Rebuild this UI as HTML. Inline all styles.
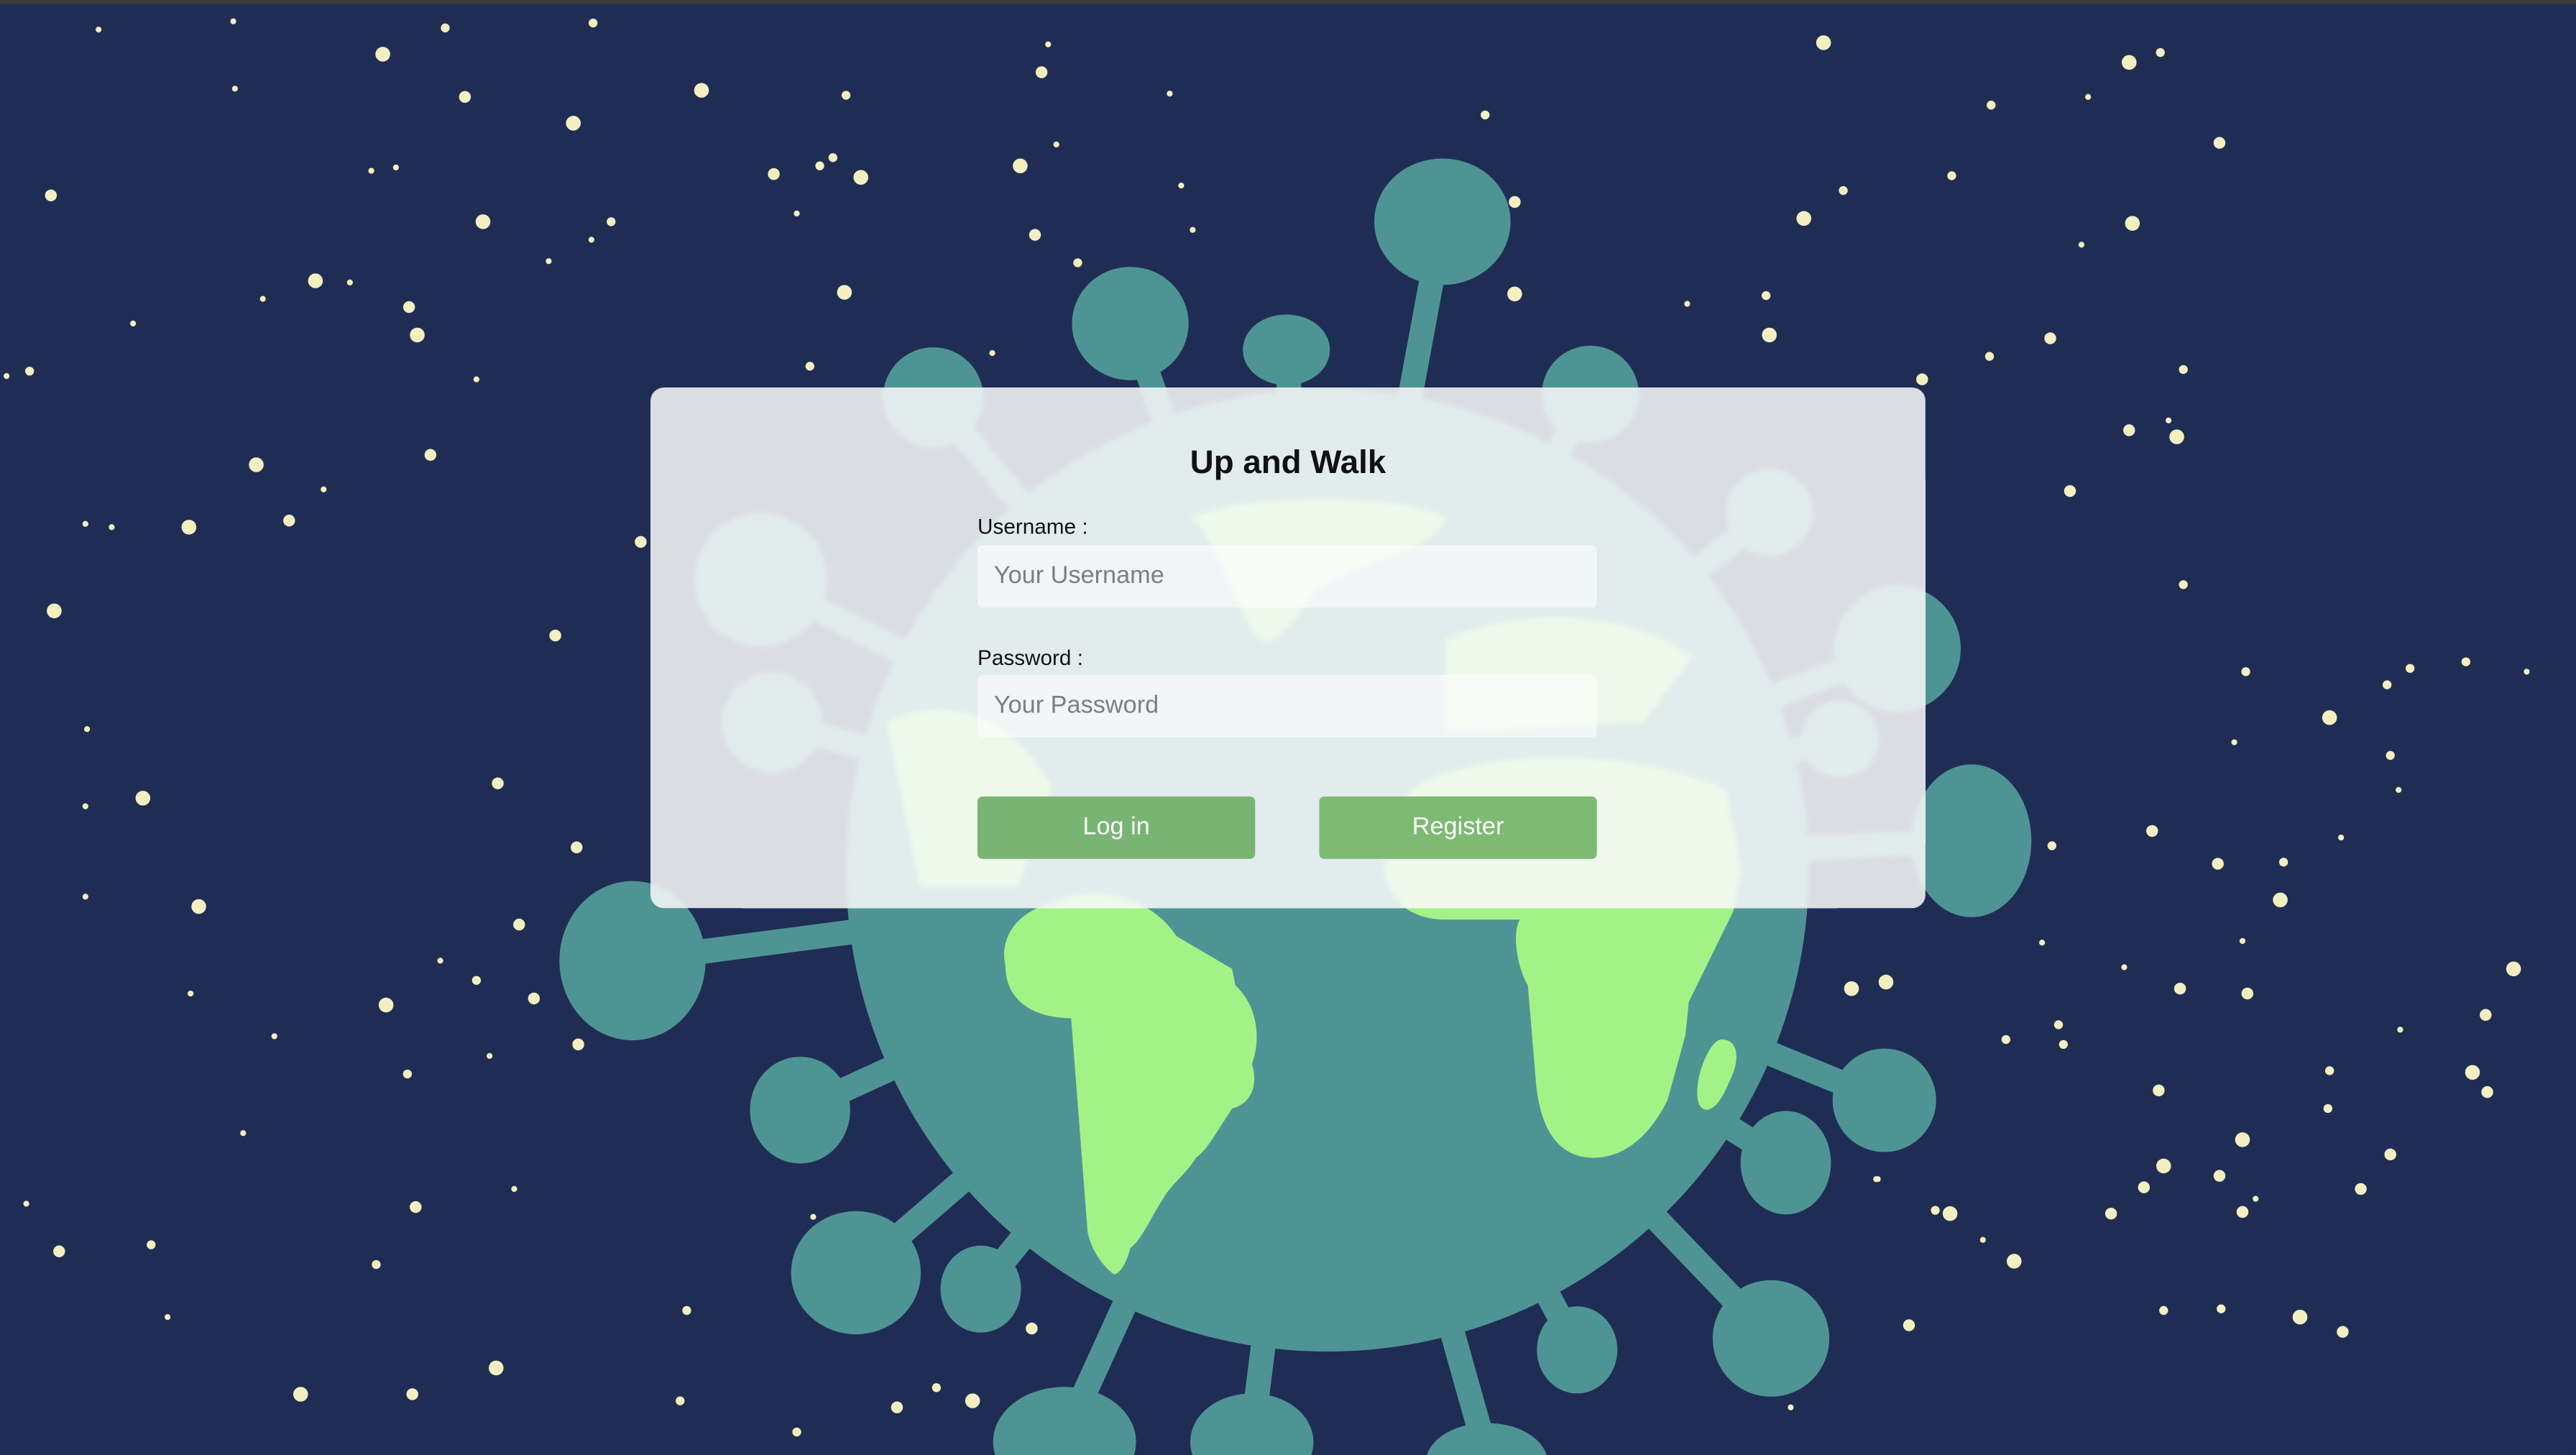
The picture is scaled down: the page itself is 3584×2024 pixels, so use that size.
<!DOCTYPE html>
<html><head><meta charset="utf-8"><style>
html,body{margin:0;padding:0;width:3584px;height:2024px;overflow:hidden;background:#1f2d54}
#w{position:absolute;left:0;top:0;width:1568px;height:886px;transform-origin:0 0;transform:scale(2.28571,2.28442);font-family:"Liberation Sans",sans-serif}
svg{position:absolute;left:0;top:0}
.card{position:absolute;left:396px;top:236px;width:776px;height:317px;border-radius:8px;background:rgba(250,250,252,0.86);backdrop-filter:blur(1.5px)}
h1{position:absolute;left:0;width:776px;top:271px;margin:0;text-align:center;font-size:20px;font-weight:bold;color:#111}
.lbl{position:absolute;left:595px;font-size:13px;color:#111}
.inp{position:absolute;left:595px;width:377px;height:38px;background:rgba(255,255,255,0.55);border-radius:3px;font-size:15px;color:#7a7f80;line-height:38px;text-indent:10px}
.btn{position:absolute;top:485px;width:169px;height:38px;border-radius:3px;color:#fff;font-size:15px;text-align:center;line-height:38px}
</style></head><body><div id="w">
<svg width="1568" height="886" viewBox="0 0 1568 886">
<rect width="1568" height="886" fill="#1f2d54"/>
<rect width="1568" height="2.5" fill="#3c3c3c"/>
<g fill="#f3efc0" id="stars">
</g>
<g stroke="#4f9494" stroke-width="15" fill="#4f9494">
<line x1="805" y1="530" x2="878" y2="135"/><ellipse cx="878" cy="135" rx="34" ry="31"/>
<line x1="805" y1="530" x2="688" y2="197"/><ellipse cx="688" cy="197" rx="28" ry="27"/>
<line x1="805" y1="530" x2="783" y2="213"/><ellipse cx="783" cy="213" rx="19" ry="14"/>
<line x1="805" y1="530" x2="568" y2="242"/><circle cx="568" cy="242" r="23"/>
<line x1="805" y1="530" x2="968" y2="240"/><circle cx="968" cy="240" r="22"/>
<line x1="805" y1="530" x2="463" y2="353"/><circle cx="463" cy="353" r="33"/>
<line x1="805" y1="530" x2="1077" y2="312"/><circle cx="1077" cy="312" r="19"/>
<line x1="805" y1="530" x2="1155" y2="395"/><ellipse cx="1155" cy="395" rx="31" ry="31"/>
<line x1="805" y1="530" x2="470" y2="440"/><circle cx="470" cy="440" r="23"/>
<line x1="805" y1="530" x2="1120" y2="450"/><circle cx="1120" cy="450" r="16"/>
<line x1="805" y1="530" x2="1200" y2="512"/><ellipse cx="1200" cy="512" rx="29" ry="39"/>
<line x1="805" y1="530" x2="385" y2="585"/><ellipse cx="385" cy="585" rx="37" ry="41"/>
<line x1="805" y1="530" x2="1147" y2="670"/><circle cx="1147" cy="670" r="24"/>
<line x1="805" y1="530" x2="487" y2="676"/><ellipse cx="487" cy="676" rx="23" ry="25"/>
<line x1="805" y1="530" x2="1087" y2="708"/><ellipse cx="1087" cy="708" rx="20" ry="24"/>
<line x1="805" y1="530" x2="521" y2="775"/><ellipse cx="521" cy="775" rx="32" ry="30"/>
<line x1="805" y1="530" x2="597" y2="785"/><ellipse cx="597" cy="785" rx="17" ry="19"/>
<line x1="805" y1="530" x2="960" y2="822"/><ellipse cx="960" cy="822" rx="17" ry="19"/>
<line x1="805" y1="530" x2="1078" y2="815"/><ellipse cx="1078" cy="815" rx="28" ry="28"/>
<line x1="805" y1="530" x2="648" y2="875"/><ellipse cx="648" cy="878" rx="36" ry="26"/>
<line x1="805" y1="530" x2="762" y2="875"/><ellipse cx="762" cy="878" rx="30" ry="22"/>
<line x1="805" y1="530" x2="905" y2="886"/><ellipse cx="905" cy="892" rx="30" ry="18"/>
<circle cx="808" cy="530" r="293" stroke="none"/>
</g>
<g fill="#a3f287">
<path d="M640 550 C665 538 700 545 716 570 L750 590 L752 600 C765 612 768 632 762 648 C766 660 762 672 750 675 C740 690 735 700 728 705 C722 715 712 722 708 730 C700 742 695 755 688 760 C686 768 682 776 678 776 C670 770 664 760 662 750 L652 620 C630 620 612 610 612 588 C608 570 620 555 640 550Z"/>
<path d="M860 480 C900 455 990 455 1050 480 L1060 530 L1055 555 L1028 610 L1026 630 L1015 670 C1005 690 990 705 970 705 C950 705 938 690 935 660 L930 600 C924 590 920 570 925 560 L880 560 C840 560 830 520 860 480Z"/>
<path d="M1048 633 C1058 633 1060 645 1052 660 C1046 675 1038 680 1034 672 C1030 660 1040 633 1048 633Z"/>
<path d="M725 315 C760 300 850 300 880 315 C875 335 830 340 800 360 C780 390 770 400 760 380 C750 360 740 330 725 315Z"/>
<path d="M880 390 C920 370 990 370 1030 400 L1000 440 L880 445 Z"/>
<path d="M540 440 C580 420 620 440 640 480 L620 540 L560 540 Z"/>
</g>
</svg>
<div class="card"></div>
<h1 style="left:396px">Up and Walk</h1>
<div class="lbl" style="top:313px">Username :</div>
<div class="inp" style="top:332px">Your Username</div>
<div class="lbl" style="top:393px">Password :</div>
<div class="inp" style="top:411px">Your Password</div>
<div class="btn" style="left:595px;background:#79b474">Log in</div>
<div class="btn" style="left:803px;background:#7dba72">Register</div>
</div>
<script>
var s=[[60,18,2],[142,13,2],[271,17,3],[361,14,3],[233,33,5],[283,59,4],[349,75,5],[427,55,5],[515,58,3],[634,44,4],[31,119,4],[294,135,5],[192,171,5],[249,187,4],[254,204,5],[160,182,2],[471,106,4],[499,101,3],[524,108,5],[507,96,3],[485,130,2],[372,135,3],[360,146,2],[334,159,2],[514,178,5],[621,101,5],[630,143,4],[656,160,3],[719,113,2],[904,70,3],[922,123,4],[922,179,5],[1110,26,5],[1296,38,5],[1315,32,3],[1351,87,4],[1212,64,3],[1188,107,3],[1122,116,3],[1098,133,5],[1298,136,5],[1267,149,2],[1075,180,3],[1077,204,5],[1027,185,2],[1211,217,3],[1248,206,4],[1170,231,4],[1329,225,3],[1296,262,4],[1325,266,5],[1320,256,2],[1260,299,4],[1329,356,3],[156,283,5],[262,277,4],[176,317,4],[115,321,5],[52,319,2],[68,321,2],[197,298,2],[33,372,5],[338,387,4],[390,330,4],[53,444,2],[87,486,5],[52,491,2],[303,477,4],[351,516,4],[121,552,5],[52,546,2],[316,563,4],[235,612,5],[290,597,3],[325,608,4],[352,636,4],[167,631,2],[248,654,3],[148,690,2],[253,735,4],[229,770,3],[36,762,4],[92,758,3],[102,802,2],[183,849,5],[251,849,4],[302,833,5],[414,853,3],[418,798,3],[485,872,3],[546,857,4],[570,845,3],[592,853,5],[628,809,4],[1367,409,3],[1418,437,5],[1453,417,3],[1467,407,3],[1501,403,3],[1538,409,2],[1360,452,2],[1455,460,3],[1460,481,2],[1310,506,4],[1350,526,4],[1390,525,3],[1388,548,5],[1249,515,3],[1365,573,2],[1530,590,5],[1513,618,4],[1368,605,4],[1327,602,4],[1148,598,5],[1127,602,5],[1221,633,3],[1253,624,3],[1256,636,3],[1314,664,4],[1418,652,3],[1365,694,5],[1417,675,3],[1455,703,4],[1461,627,2],[1505,653,5],[1514,665,4],[1317,710,5],[1305,723,4],[1351,716,4],[1373,730,2],[1365,738,4],[1437,724,4],[1285,739,4],[1187,739,5],[1178,737,3],[1207,755,2],[1226,768,5],[1162,807,4],[1317,798,3],[1352,797,3],[1400,802,5],[1426,811,4],[1142,718,2],[1098,647,4],[18,226,3],[4,229,2],[81,197,2],[213,172,2],[143,54,2],[226,104,2],[241,102,2],[290,231,2],[493,223,3],[604,215,2],[643,88,2],[638,27,2],[712,57,2],[726,140,2],[1271,59,2],[1243,574,2],[1293,589,2],[1425,510,2],[1143,718,2],[268,585,2],[298,643,2],[116,605,2],[313,724,2],[16,733,2],[495,741,2],[1090,857,2]];
var g=document.getElementById('stars'),h='';
s.forEach(function(a){h+='<circle cx="'+a[0]+'" cy="'+a[1]+'" r="'+(a[2]*0.9)+'"/>';});
g.innerHTML=h;
</script>
</body></html>
